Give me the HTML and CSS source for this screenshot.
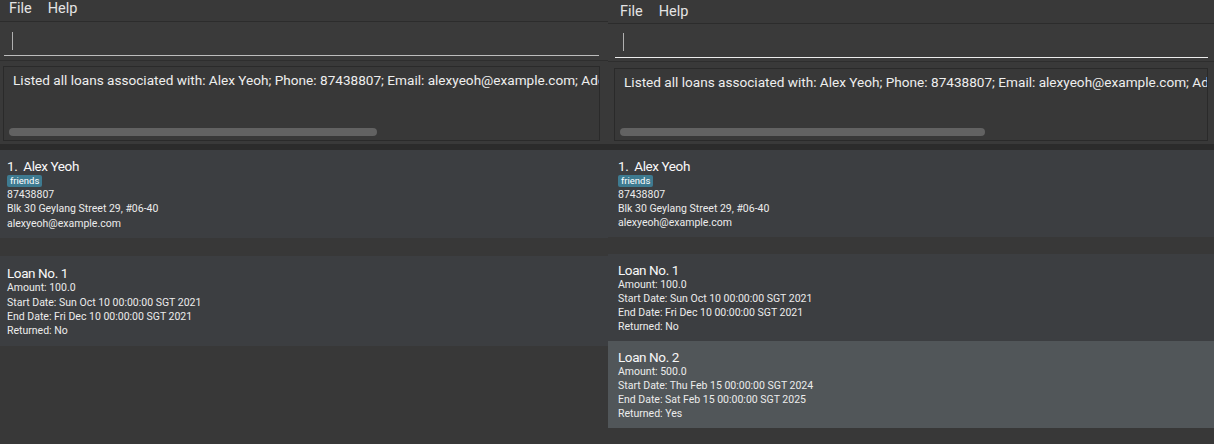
FILE: index.html
```html
<!DOCTYPE html>
<html lang="en">
<head>
<meta charset="utf-8">
<title>Loan book</title>
<link rel="stylesheet" href="styles.css">
</head>
<body>
<div class="screen">
  <section class="win win--left">
    <nav class="menubar"><span class="menu-item">File</span><span class="menu-item">Help</span></nav>
    <div class="command"><div class="command-field"><span class="caret"></span></div></div>
    <div class="result-wrap">
      <div class="result">
        <p class="result-text">Listed all loans associated with: Alex Yeoh; Phone: 87438807; Email: alexyeoh@example.com; Address: Blk 30 Geylang Street 29, #06-40; Tags: [friends]</p>
        <div class="scroll-track"><div class="scroll-thumb" style="width:368px"></div></div>
      </div>
    </div>
    <div class="divider"></div>
    <div class="lists">
      <article class="card person">
        <div class="title">1.&nbsp; Alex Yeoh</div>
        <div class="tags"><span class="tag">friends</span></div>
        <div class="detail">87438807</div>
        <div class="detail">Blk 30 Geylang Street 29, #06-40</div>
        <div class="detail">alexyeoh@example.com</div>
      </article>
      <div class="loan-list">
        <article class="card loan">
          <div class="title">Loan No. 1</div>
          <div class="detail">Amount: 100.0</div>
          <div class="detail">Start Date: Sun Oct 10 00:00:00 SGT 2021</div>
          <div class="detail">End Date: Fri Dec 10 00:00:00 SGT 2021</div>
          <div class="detail">Returned: No</div>
        </article>
      </div>
    </div>
  </section>
  <section class="win win--right">
    <nav class="menubar"><span class="menu-item">File</span><span class="menu-item">Help</span></nav>
    <div class="command"><div class="command-field"><span class="caret"></span></div></div>
    <div class="result-wrap">
      <div class="result">
        <p class="result-text">Listed all loans associated with: Alex Yeoh; Phone: 87438807; Email: alexyeoh@example.com; Address: Blk 30 Geylang Street 29, #06-40; Tags: [friends]</p>
        <div class="scroll-track"><div class="scroll-thumb" style="width:365px"></div></div>
      </div>
    </div>
    <div class="divider"></div>
    <div class="lists">
      <article class="card person">
        <div class="title">1.&nbsp; Alex Yeoh</div>
        <div class="tags"><span class="tag">friends</span></div>
        <div class="detail">87438807</div>
        <div class="detail">Blk 30 Geylang Street 29, #06-40</div>
        <div class="detail">alexyeoh@example.com</div>
      </article>
      <div class="loan-list">
        <article class="card loan">
          <div class="title">Loan No. 1</div>
          <div class="detail">Amount: 100.0</div>
          <div class="detail">Start Date: Sun Oct 10 00:00:00 SGT 2021</div>
          <div class="detail">End Date: Fri Dec 10 00:00:00 SGT 2021</div>
          <div class="detail">Returned: No</div>
        </article>
        <article class="card loan loan--odd">
          <div class="title">Loan No. 2</div>
          <div class="detail">Amount: 500.0</div>
          <div class="detail">Start Date: Thu Feb 15 00:00:00 SGT 2024</div>
          <div class="detail">End Date: Sat Feb 15 00:00:00 SGT 2025</div>
          <div class="detail">Returned: Yes</div>
        </article>
      </div>
    </div>
  </section>
</div>
</body>
</html>
```

FILE: styles.css
```css
* { box-sizing: border-box; }

html, body {
  margin: 0;
  padding: 0;
  background: #383838;
  overflow: hidden;
}

body {
  font-family: Roboto, "Liberation Sans", sans-serif;
  color: #ffffff;
}

.screen {
  display: grid;
  grid-template-columns: 608px 606px;
  width: 1214px;
  height: 444px;
}

.win {
  display: flex;
  flex-direction: column;
  min-width: 0;
  overflow: hidden;
  background: #383838;
}

/* menu bar */
.menubar {
  display: flex;
  align-items: center;
  height: 24px;
  padding-left: 4px;
  background: #393939;
  border-bottom: 1px solid #2c2c2c;
}
.menu-item {
  padding: 0 8px;
  font-size: 14.5px;
  color: #e4e4e4;
  line-height: 16px;
}

/* command box */
.command {
  padding: 6px 6px 3px 7px;
  background: #3a3a3a;
  border-bottom: 1px solid #2e2e2e;
}
.command-field {
  display: flex;
  padding: 3px 0 6px 8px;
  border-bottom: 1px solid #ececec;
}
.caret {
  display: block;
  width: 1px;
  height: 18px;
  background: #b0b0b0;
}

/* result display */
.result-wrap {
  padding: 6px 6px 3px 6px;
  background: #393939;
}
.result {
  display: flex;
  flex-direction: column;
  justify-content: space-between;
  height: 73px;
  padding: 5px 0 4px 5px;
  background: #383838;
  border: 1px solid #2a2a2a;
  overflow: hidden;
}
.result-text {
  margin: 0 0 0 4px;
  font-size: 13.6px;
  line-height: 16px;
  white-space: nowrap;
  overflow: hidden;
  color: #eeeeee;
}
.scroll-track {
  height: 8px;
}
.scroll-thumb {
  height: 8px;
  border-radius: 4px;
  background: #626262;
}

.divider {
  height: 6px;
  background: #2b2b2b;
}

/* lists */
.lists {
  flex: 1;
  display: flex;
  flex-direction: column;
  gap: 17px;
  background: #383838;
}
.loan-list {
  display: flex;
  flex-direction: column;
}

.card {
  padding: 8px 10px 7px;
  background: #3c3e41;
}
.loan--odd {
  background: #515659;
}
.title {
  font-size: 13.5px;
  letter-spacing: -0.4px;
  line-height: 16px;
  color: #f8f8f8;
}
.tags {
  display: flex;
  margin-top: 1px;
}
.tag {
  display: block;
  height: 12px;
  padding: 0 3px;
  font-size: 9.5px;
  line-height: 12px;
  color: #ffffff;
  background: #3e7b91;
  border-radius: 2px;
}
.person .tags + .detail {
  margin-top: 1px;
}
.detail {
  font-size: 10.5px;
  line-height: 14px;
  color: #ececec;
  white-space: nowrap;
}

/* left window differs slightly */
.win--left .menubar {
  height: 22px;
  padding-left: 1px;
}
.win--left .menu-item {
  position: relative;
  top: -2px;
}
.win--left .command {
  padding: 6px 9px 4px 4px;
}
.win--left .command-field {
  padding: 4px 0 5px 8px;
  border-bottom-color: #bdbdbd;
}
.win--left .result-wrap {
  padding: 5px 8px 3px 3px;
}
.win--left .result {
  height: 75px;
}
.win--left .card {
  padding-left: 7px;
}
.win--left .detail {
  line-height: 14.4px;
}
.win--left .lists {
  gap: 18px;
}
.win--left .loan {
  padding-top: 9px;
}
```
